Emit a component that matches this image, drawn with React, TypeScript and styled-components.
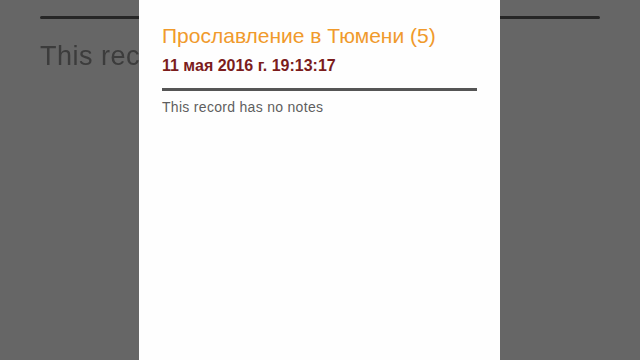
import React from 'react';
import styled, { createGlobalStyle } from 'styled-components';

const GlobalStyle = createGlobalStyle`
  html, body {
    margin: 0;
    padding: 0;
    width: 640px;
    height: 360px;
    overflow: hidden;
    background: #666666;
    font-family: 'Liberation Sans', Arial, sans-serif;
  }
`;

const Screen = styled.div`
  position: relative;
  width: 640px;
  height: 360px;
  background: #666666;
  overflow: hidden;
`;

const BackPage = styled.div`
  padding: 16px 40px 0 40px;
  filter: blur(0.6px);
`;

const BackRule = styled.div`
  height: 3px;
  background: #262626;
  border-radius: 2px;
`;

const BackNotes = styled.p`
  margin: 22px 0 0;
  max-width: 99px;
  overflow: hidden;
  white-space: nowrap;
  font-size: 27px;
  color: #3c3c3c;
  letter-spacing: 0.5px;
`;

const Panel = styled.div`
  position: absolute;
  top: 0;
  bottom: 0;
  left: 139px;
  width: 361px;
  background: #fefefe;
  box-sizing: border-box;
  padding: 24px 23px 0 23px;
`;

const Title = styled.h1`
  margin: 0;
  font-size: 21px;
  font-weight: normal;
  color: #f09a2c;
  line-height: 24px;
`;

const Stamp = styled.div`
  margin-top: 9px;
  font-size: 16px;
  font-weight: bold;
  color: #7b1c1c;
  line-height: 18px;
`;

const Rule = styled.hr`
  margin: 13px 0 0;
  border: none;
  height: 3px;
  background: #555555;
`;

const Notes = styled.p`
  margin: 8px 0 0;
  font-size: 14px;
  letter-spacing: 0.3px;
  color: #5e5e5e;
  line-height: 16px;
`;

export default function App() {
  return (
    <Screen>
      <GlobalStyle />
      <BackPage>
        <BackRule />
        <BackNotes>This record has no notes</BackNotes>
      </BackPage>
      <Panel>
        <Title>Прославление в Тюмени (5)</Title>
        <Stamp>11 мая 2016 г. 19:13:17</Stamp>
        <Rule />
        <Notes>This record has no notes</Notes>
      </Panel>
    </Screen>
  );
}
